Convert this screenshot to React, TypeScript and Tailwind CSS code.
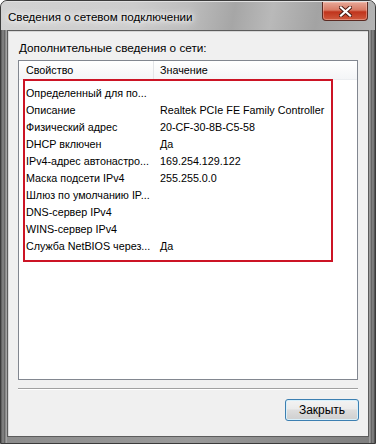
import React from "react";

const rows: [string, string][] = [
  ["Определенный для по...", ""],
  ["Описание", "Realtek PCIe FE Family Controller"],
  ["Физический адрес", "20-CF-30-8B-C5-58"],
  ["DHCP включен", "Да"],
  ["IPv4-адрес автонастро...", "169.254.129.122"],
  ["Маска подсети IPv4", "255.255.0.0"],
  ["Шлюз по умолчанию IP...", ""],
  ["DNS-сервер IPv4", ""],
  ["WINS-сервер IPv4", ""],
  ["Служба NetBIOS через...", "Да"],
];

const CloseButton = () => (
  <div className="absolute right-[7px] top-0 h-[19px] w-[46px] rounded-b-[4px] border border-t-0 border-[#5b2a22] bg-[linear-gradient(to_bottom,#e6a898_0%,#d87a64_45%,#c0341c_55%,#cf5a3e_100%)] shadow-[inset_0_0_0_1px_rgba(255,210,200,0.4)] flex items-center justify-center">
    <svg width="13" height="11" viewBox="0 0 13 11">
      <path
        d="M2 1.5 L11 9.5 M11 1.5 L2 9.5"
        stroke="#4a1a12"
        strokeWidth="4"
        strokeLinecap="square"
      />
      <path
        d="M2 1.5 L11 9.5 M11 1.5 L2 9.5"
        stroke="#ffffff"
        strokeWidth="2.2"
        strokeLinecap="square"
      />
    </svg>
  </div>
);

export default function App() {
  return (
    <div
      className="w-[376px] h-[444px] bg-white"
      style={{ fontFamily: '"Liberation Sans", Arial, sans-serif' }}
    >
      <div className="w-full h-full flex flex-col rounded-t-[7px] border border-[#3b3b3b] bg-[linear-gradient(to_right,#8c8c8c,#9a9a9a_50%,#7e7e7e)] overflow-hidden">
        {/* title bar */}
        <div className="relative h-[29px] shrink-0 flex items-center pl-[7px] pt-[1px] bg-[linear-gradient(100deg,#d2d2d2_0%,#cdcdcd_35%,#bdbdbd_50%,#a6a6a6_62%,#b9b9b9_72%,#a3a3a3_84%,#b4b4b4_100%)] border-t border-[#e0e0e0]">
          <span className="text-[11.6px] text-black leading-none [text-shadow:0_0_8px_#f2f2f2,0_0_12px_#f2f2f2,0_0_4px_#ffffff]">
            Сведения о сетевом подключении
          </span>
          <CloseButton />
        </div>
        {/* client area */}
        <div className="flex-1 flex px-[6px] pb-[6px] bg-[linear-gradient(to_right,#555555_0px,#8a8a8a_2px,#5a5a5a_4px,#b8b8b8_5px,transparent_6px),linear-gradient(to_left,#444444_0px,#8a8a8a_2px,#5a5a5a_4px,#b8b8b8_5px,transparent_6px)]">
          <div className="flex-1 flex flex-col border border-[#5c5c5c] bg-[#f0f0f0] shadow-[inset_1px_1px_0_#d6d6d6]">
            <div className="pt-[10px] pl-[11px] text-[11.75px] leading-[14px] text-black">
              Дополнительные сведения о сети:
            </div>
            <div className="relative mt-[5px] mx-[10px] h-[320px] border border-[#828790] bg-white text-[10.75px] text-black">
              {/* header */}
              <div className="flex h-[19px] items-center bg-[linear-gradient(to_bottom,#ffffff,#f4f5f7)] border-b border-[#eceef1]">
                <div className="w-[135px] h-full flex items-center pl-[7px] border-r border-[#e3e5e8]">
                  Свойство
                </div>
                <div className="flex-1 pl-[6px]">Значение</div>
              </div>
              <div className="pt-[5px]">
                {rows.map(([k, v]) => (
                  <div key={k} className="flex h-[17px] items-center">
                    <div className="w-[135px] pl-[7px] whitespace-nowrap overflow-hidden">
                      {k}
                    </div>
                    <div className="flex-1 pl-[6px] whitespace-nowrap">{v}</div>
                  </div>
                ))}
              </div>
              {/* highlight overlay */}
              <div className="absolute left-[4px] top-[18px] w-[310px] h-[183px] border-2 border-[#cc1425] pointer-events-none" />
            </div>
            <div className="mt-[8px] mx-[10px] h-[2px] border-t border-[#a0a0a0] border-b border-b-white" />
            <div className="mt-[9px] flex justify-end pr-[9px]">
              <button className="w-[74px] h-[22px] rounded-[3px] border border-[#3c7fb1] bg-[linear-gradient(to_bottom,#f3f3f3_0%,#ebebeb_45%,#dddddd_50%,#cfcfcf_100%)] shadow-[inset_0_0_0_1px_#d8f0fb] text-[12px] text-black leading-none">
                Закрыть
              </button>
            </div>
          </div>
        </div>
      </div>
    </div>
  );
}
